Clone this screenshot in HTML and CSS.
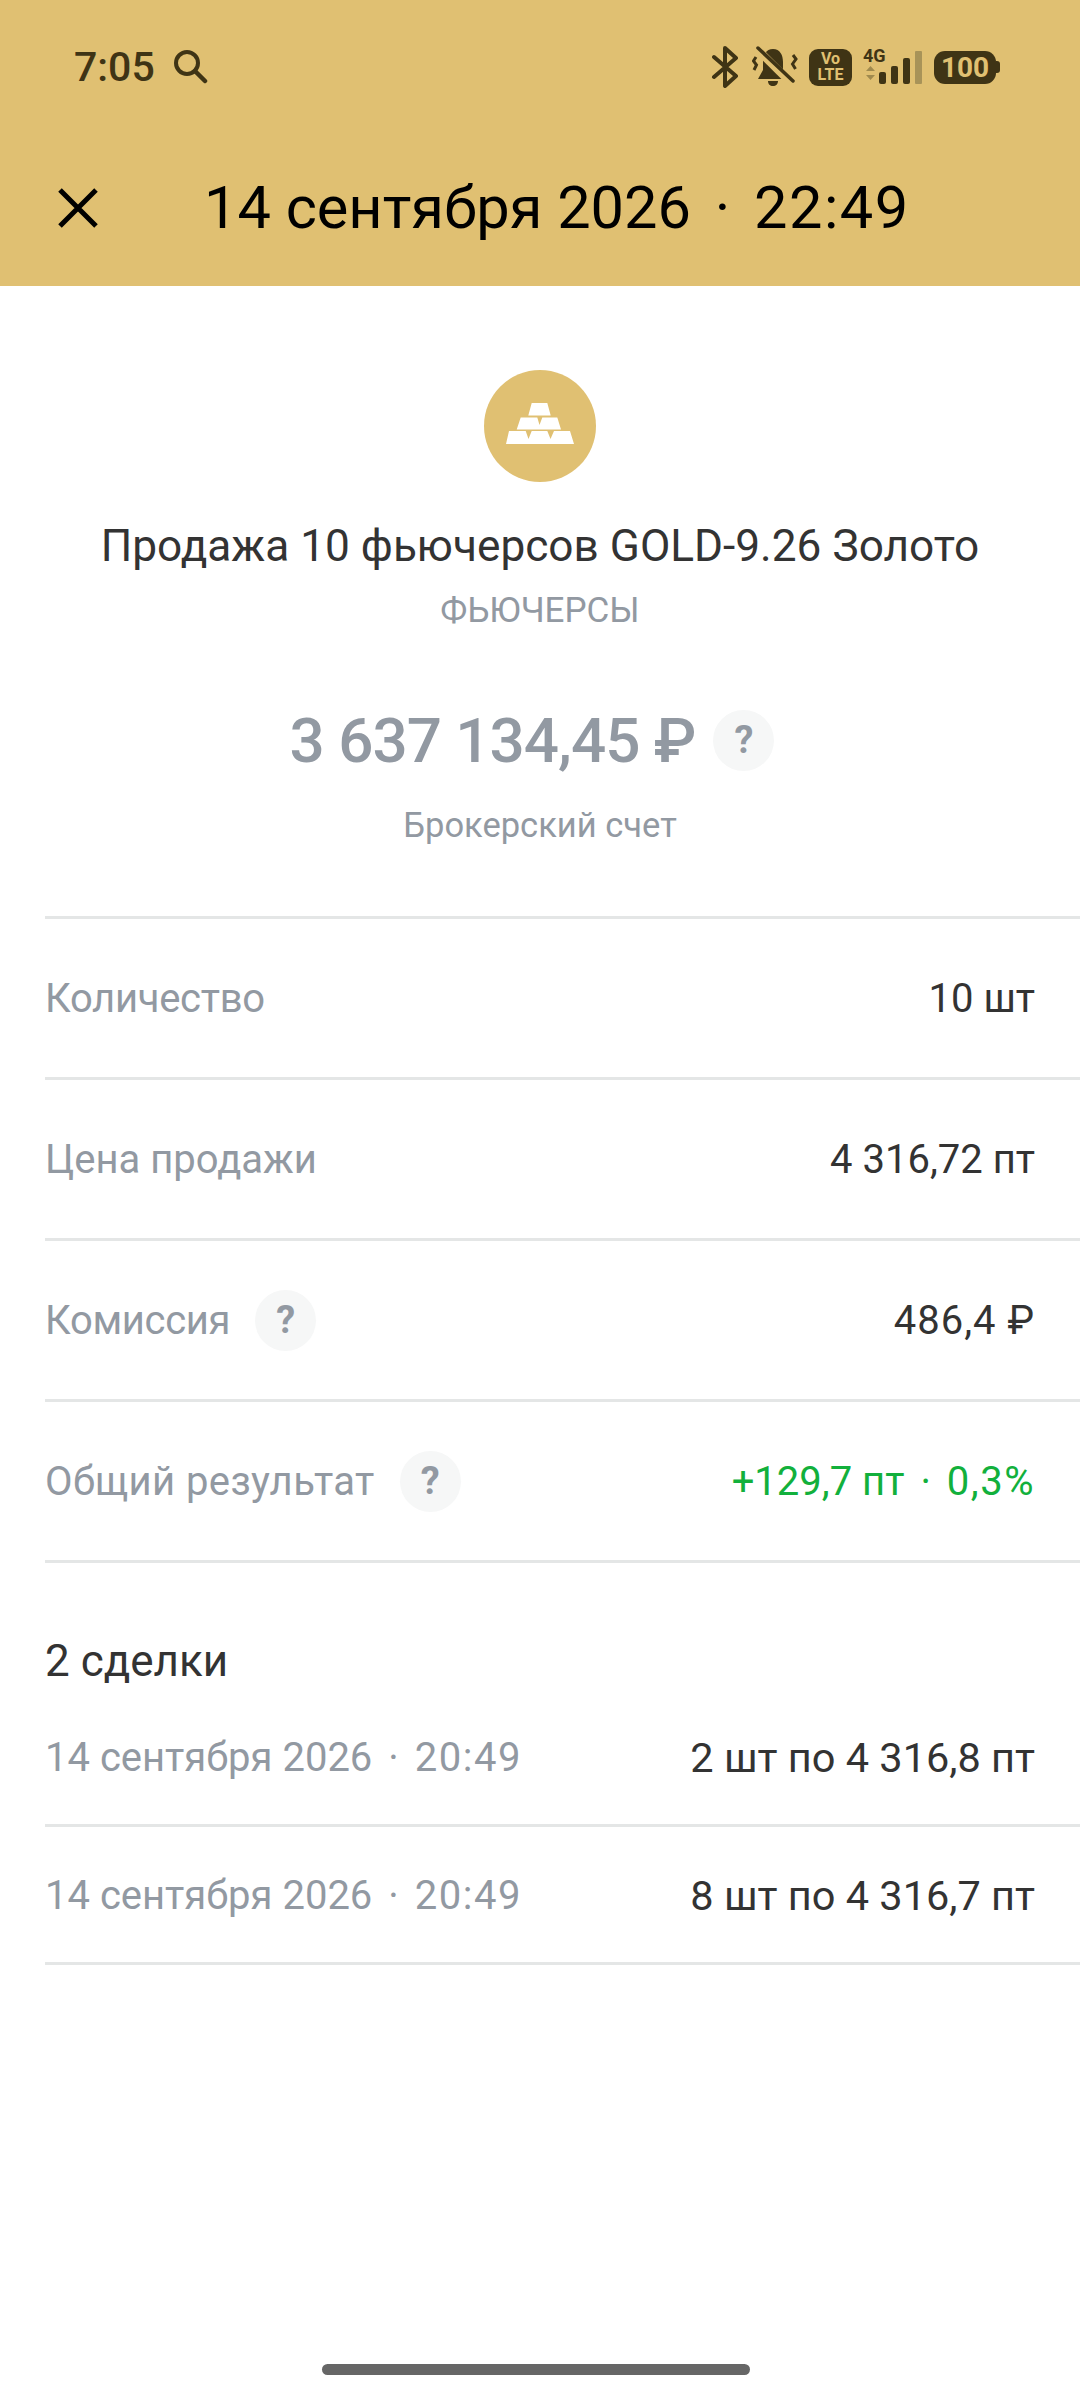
FILE: index.html
```html
<!DOCTYPE html>
<html lang="ru">
<head>
	<meta charset="UTF-8">
	<title>Операция</title>
	<link rel="stylesheet" href="styles.css">
</head>
<body>
	<div class="top">
		<div class="status">
			<div class="status-left">
				<span class="time">7:05</span>
				<svg class="search" width="36" height="36" viewBox="0 0 36 36"><circle cx="15" cy="14" r="11" fill="none" stroke="#3f3415" stroke-width="4"/><path d="M23 22 L33 32" stroke="#3f3415" stroke-width="4.500" stroke-linecap="round"/></svg>
			</div>
			<div class="status-right">
				<svg width="30" height="42" viewBox="0 0 30 42"><path d="M3 11 L25 30 L14 40 V2 L25 12 L3 31" fill="none" stroke="#3f3415" stroke-width="4" stroke-linecap="round" stroke-linejoin="round"/></svg>
				<svg class="bell" width="46" height="42" viewBox="0 0 46 42"><path d="M21 3 C14 3 11 9 11 16 V24 L6 33 H36 L31 24 V16 C31 9 28 3 21 3 Z M16 35 H26 C26 38 24 40 21 40 C18 40 16 38 16 35 Z" fill="#3f3415"/><path d="M3 1 L38 36" stroke="#e0c072" stroke-width="8"/><path d="M6 2 L41 35" stroke="#3f3415" stroke-width="3.500" stroke-linecap="round"/><path d="M4 11 L1.500 15 L4.500 19 L2 24 M41 9 L44 13 L40.500 18 L43.500 23" fill="none" stroke="#3f3415" stroke-width="3"/></svg>
				<span class="volte">Vo<br>LTE</span>
				<svg class="net" width="60" height="40" viewBox="0 -4 60 40"><text x="0" y="13" class="net-text">4G</text><path d="M3 22 L7.500 17 L12 22 Z M3 26 L7.500 31 L12 26 Z" fill="#a08a4e"/><rect x="16" y="23" width="7" height="12" rx="2" fill="#3f3415"/><rect x="28" y="17" width="7" height="18" rx="2" fill="#3f3415"/><rect x="40" y="9" width="7" height="26" rx="2" fill="#3f3415"/><rect x="52" y="2" width="7" height="33" rx="1" fill="#a89358"/></svg>
				<div class="battery"><span class="battery-body">100</span><span class="battery-tip"></span></div>
			</div>
		</div>
		<div class="titlebar">
			<svg class="close" width="44" height="44" viewBox="0 0 44 44"><path d="M4 4 L40 40 M40 4 L4 40" stroke="#000" stroke-width="5"/></svg>
			<div class="title">14 сентября 2026<span class="dot">·</span><span class="clock">22:49</span></div>
		</div>
	</div>

	<div class="summary">
		<div class="logo">
			<svg width="70" height="42" viewBox="-1 0 70 42"><path d="M25.700 0 H41.300 L44.700 12.600 H22.300 Z M14.700 14.500 H31.300 L33.500 22 L36.300 14.500 H51.300 L55 26.500 H10.700 Z M3 28 H19.700 L22.500 36 L25.700 28 H41.300 L44.500 36 L48 28 H64 L68 41 H0 Z" fill="#fff"/></svg>
		</div>
		<div class="name">Продажа 10 фьючерсов GOLD-9.26 Золото</div>
		<div class="kind">ФЬЮЧЕРСЫ</div>
		<div class="amount"><span>3 637 134,45 ₽</span><span class="help">?</span></div>
		<div class="account">Брокерский счет</div>
	</div>

	<div class="rows">
		<div class="row"><div class="label tight">Количество</div><div class="value">10 шт</div></div>
		<div class="row"><div class="label">Цена продажи</div><div class="value">4 316,72 пт</div></div>
		<div class="row"><div class="label tight">Комиссия<span class="help">?</span></div><div class="value wide">486,4 ₽</div></div>
		<div class="row"><div class="label loose">Общий результат<span class="help">?</span></div><div class="value green">+129,7 пт<span class="dot">·</span><span class="clock">0,3%</span></div></div>
	</div>

	<div class="deals">
		<h2>2 сделки</h2>
		<div class="deal"><div class="label">14 сентября 2026<span class="dot">·</span><span class="clock">20:49</span></div><div class="value">2 шт по 4 316,8 пт</div></div>
		<div class="deal"><div class="label">14 сентября 2026<span class="dot">·</span><span class="clock">20:49</span></div><div class="value">8 шт по 4 316,7 пт</div></div>
	</div>

	<div class="home"></div>
</body>
</html>
```
FILE: styles.css
```css
*{
	margin: 0;
	padding: 0;
	box-sizing: border-box;
}
body{
	width: 1080px;
	height: 2392px;
	background: #fff;
	font-family: "Roboto", "Noto Sans", sans-serif;
	color: #333;
	position: relative;
	overflow: hidden;
}
.top{
	height: 286px;
	background: #e0c072;
}
.status{
	height: 134px;
	padding: 46px 80px 0 74px;
	display: flex;
	justify-content: space-between;
	align-items: flex-start;
}
.status-left{
	display: flex;
	align-items: center;
	gap: 17px;
	height: 42px;
}
.time{
	font-size: 41px;
	font-weight: 500;
	color: #3f3415;
}
.status-right{
	display: flex;
	align-items: center;
	gap: 11px;
	height: 42px;
}
.volte{
	width: 43px;
	height: 37px;
	background: #3f3415;
	color: #e0c072;
	border-radius: 9px;
	font-size: 16px;
	line-height: 16px;
	font-weight: 700;
	text-align: center;
	padding-top: 2px;
}
.net{
	align-self: flex-start;
	margin-top: -1px;
}
.net-text{
	font-size: 18px;
	font-weight: 700;
	fill: #3f3415;
}
.battery{
	display: flex;
	align-items: center;
}
.battery-body{
	width: 62px;
	height: 33px;
	background: #3f3415;
	color: #e0c072;
	border-radius: 11px;
	font-size: 28px;
	line-height: 33px;
	font-weight: 700;
	text-align: center;
}
.battery-tip{
	width: 4px;
	height: 12px;
	background: #3f3415;
	border-radius: 0 3px 3px 0;
}
.titlebar{
	display: flex;
	align-items: center;
	height: 146px;
	padding: 2px 0 0 56px;
}
.close{
	margin-right: 104px;
}
.title{
	font-size: 59.500px;
	color: #000;
	white-space: nowrap;
}
.dot{
	margin: 0 0.4em;
}
.clock{
	letter-spacing: 1.500px;
}
.summary{
	display: flex;
	flex-direction: column;
	align-items: center;
	padding-top: 84px;
	height: 630px;
}
.logo{
	width: 112px;
	height: 112px;
	border-radius: 50%;
	background: #e0c072;
	display: flex;
	align-items: center;
	justify-content: center;
	padding-bottom: 4px;
}
.name{
	margin-top: 38px;
	font-size: 44.200px;
	line-height: 52px;
	color: #333;
	white-space: nowrap;
}
.kind{
	margin-top: 19px;
	font-size: 35px;
	line-height: 40px;
	color: #9299a2;
}
.amount{
	margin-top: 74px;
	margin-right: 16px;
	display: flex;
	align-items: center;
	gap: 18px;
	height: 70px;
	font-size: 62px;
	font-weight: 500;
	letter-spacing: -1px;
	color: #9299a2;
}
.help{
	display: inline-flex;
	align-items: center;
	justify-content: center;
	width: 61px;
	height: 61px;
	border-radius: 50%;
	background: #f6f7f7;
	color: #9299a2;
	font-size: 38px;
	font-weight: 700;
	letter-spacing: 0;
}
.account{
	margin-top: 30px;
	font-size: 34.500px;
	line-height: 40px;
	color: #9299a2;
}
.rows{
	padding-left: 45px;
}
.row{
	display: flex;
	justify-content: space-between;
	align-items: center;
	height: 161px;
	padding-right: 45px;
	border-top: 3px solid #e4e6e6;
}
.rows .row:last-child{
	height: 164px;
	border-bottom: 3px solid #e4e6e6;
}
.label{
	display: flex;
	align-items: center;
	font-size: 40px;
	color: #9299a2;
}
.label .help{
	margin-left: 25px;
}
.tight{
	letter-spacing: -0.300px;
}
.loose{
	letter-spacing: 0.400px;
}
.value{
	font-size: 40px;
	color: #333;
}
.wide{
	letter-spacing: 1px;
}
.green{
	color: #12b03c;
}
.deals{
	padding: 72px 0 0 45px;
}
.deals h2{
	font-size: 44px;
	font-weight: 400;
	line-height: 52px;
	color: #333;
	margin-bottom: 2px;
}
.deal{
	display: flex;
	justify-content: space-between;
	align-items: center;
	height: 138px;
	padding: 2px 45px 0 0;
	border-bottom: 3px solid #e4e6e6;
}
.deal .value{
	font-size: 41.500px;
}
.home{
	position: absolute;
	left: 322px;
	top: 2364px;
	width: 428px;
	height: 11px;
	background: #666;
	border-radius: 6px;
}
```
